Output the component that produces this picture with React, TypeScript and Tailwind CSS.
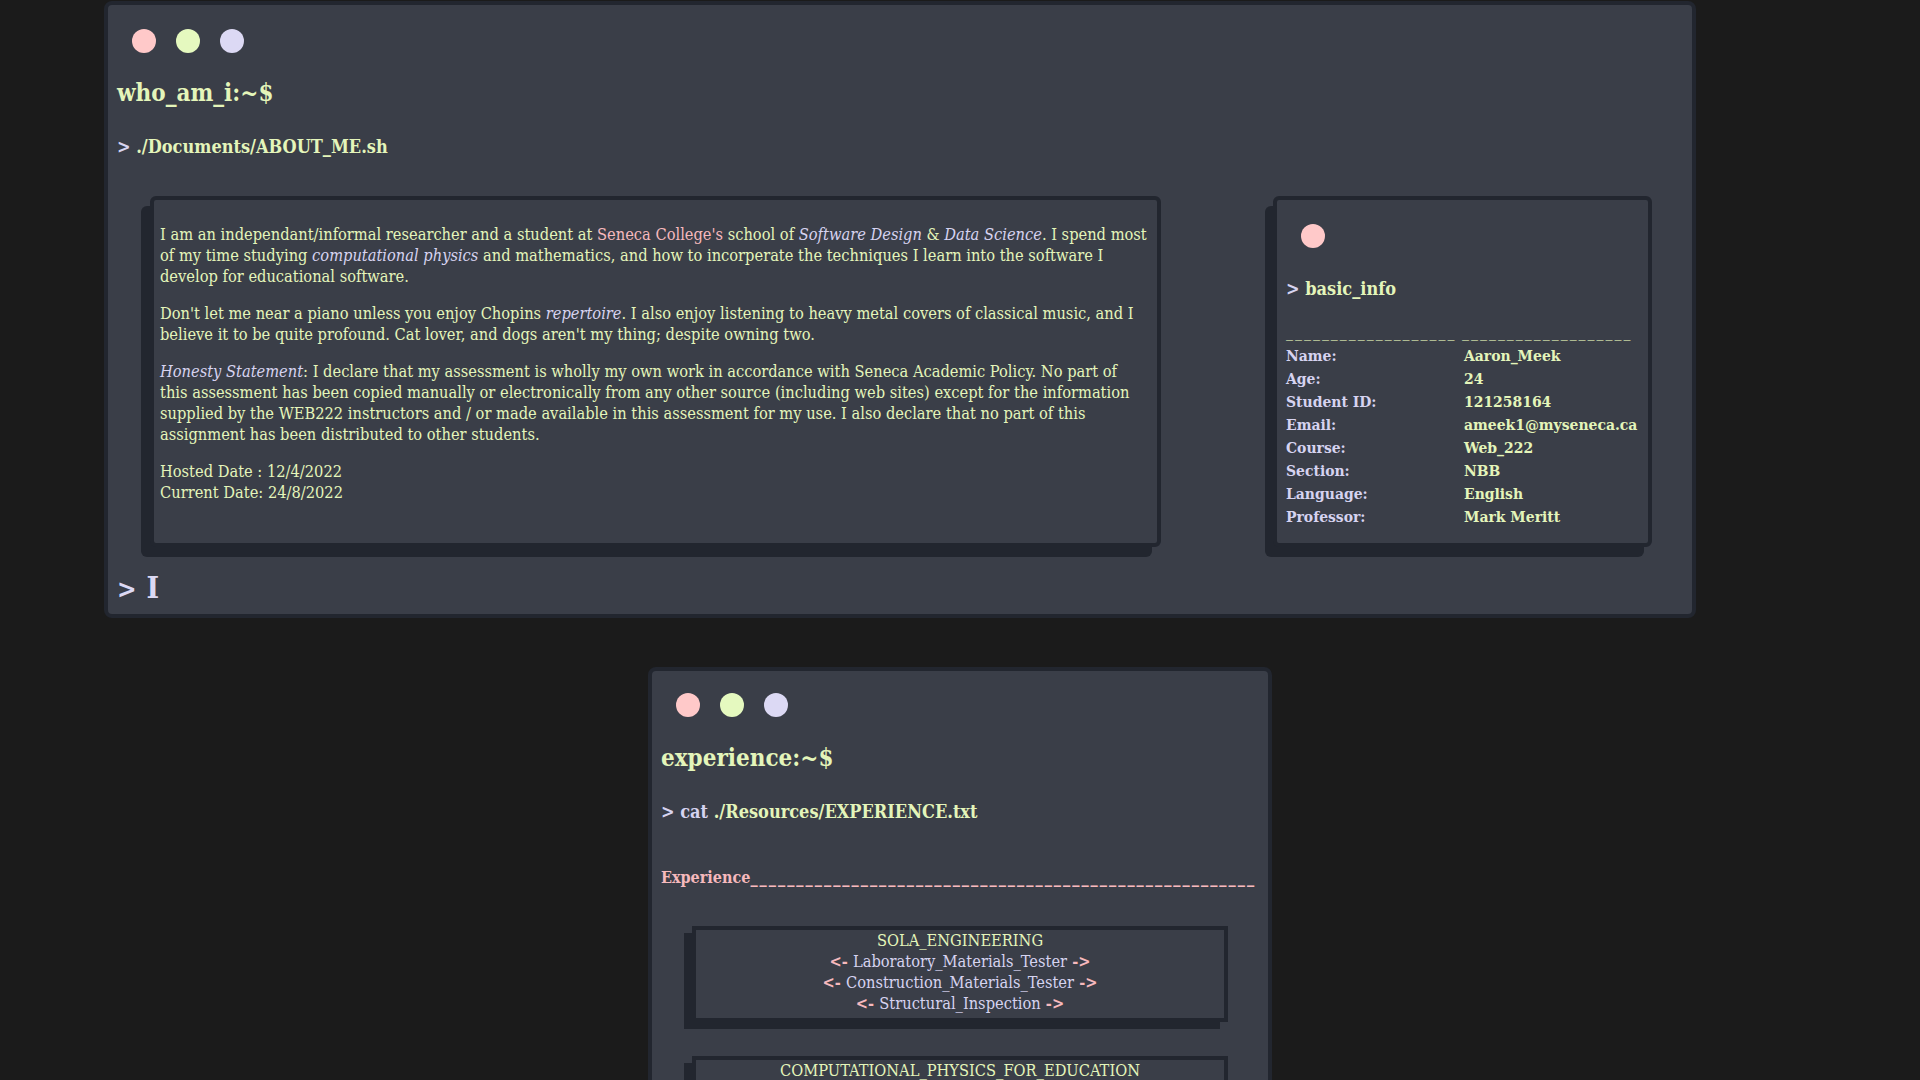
import React from "react";

const GREEN = "text-[#e4f5ba]";

function Dots({ only }: { only?: boolean }) {
  return (
    <div className="flex gap-[20px]">
      <span className="block h-[24px] w-[24px] rounded-full bg-[#ffc9c9]" />
      {!only && <span className="block h-[24px] w-[24px] rounded-full bg-[#e5f9bf]" />}
      {!only && <span className="block h-[24px] w-[24px] rounded-full bg-[#dcd9f4]" />}
    </div>
  );
}

function Em({ children }: { children: React.ReactNode }) {
  return <em className="italic text-[#d6d3f0]">{children}</em>;
}

const rows: [string, string][] = [
  ["Name:", "Aaron_Meek"],
  ["Age:", "24"],
  ["Student ID:", "121258164"],
  ["Email:", "ameek1@myseneca.ca"],
  ["Course:", "Web_222"],
  ["Section:", "NBB"],
  ["Language:", "English"],
  ["Professor:", "Mark Meritt"],
];

function ExpBox({ title, items }: { title: string; items: string[] }) {
  return (
    <div className="mx-[40px] border-4 border-[#22262f] bg-[#3a3e48] pb-[4px] text-center text-[16.3px] leading-[21px] shadow-[-8px_7px_0_#22262f]">
      <div className={GREEN}>{title}</div>
      {items.map((it) => (
        <div key={it} className="text-[#d6d3f0]">
          <span className="font-bold text-[#f6b9bd]">&lt;- </span>
          {it}
          <span className="font-bold text-[#f6b9bd]"> -&gt;</span>
        </div>
      ))}
    </div>
  );
}

export default function App() {
  return (
    <div
      className="min-h-screen bg-[#1b1b1b] pt-[1px] pb-[40px] font-stretch-condensed"
      style={{ fontFamily: '"DejaVu Serif", "Liberation Serif", serif' }}
    >
      {/* Top window */}
      <div className="ml-[104px] w-[1592px] rounded-lg border-4 border-[#22262f] bg-[#3a3e48] pt-[24px] pb-[7px]">
        <div className="pl-[24px]">
          <Dots />
        </div>
        <div className={`mt-[24px] pl-[9px] text-[24px] font-bold leading-[32px] ${GREEN}`}>who_am_i:~$</div>
        <div className={`mt-[26px] pl-[9px] text-[18px] font-bold leading-[24px] ${GREEN}`}>
          <span className="text-[#d6d3f0]">&gt;</span> ./Documents/ABOUT_ME.sh
        </div>

        <div className="mt-[37px] flex justify-between pl-[42px] pr-[40px]">
          {/* About card */}
          <div className="h-[351px] w-[1011px] rounded-md border-4 border-[#22262f] bg-[#3a3e48] pl-[6px] pr-[4px] pt-[24px] shadow-[-9px_10px_0_#22262f]">
            <div className={`flex flex-col gap-[16px] text-[16.3px] leading-[21px] whitespace-nowrap ${GREEN}`}>
              <p>
                I am an independant/informal researcher and a student at{" "}
                <span className="text-[#f6b9bd]">Seneca College's</span> school of <Em>Software Design</Em> &amp;{" "}
                <Em>Data Science</Em>. I spend most
                <br />
                of my time studying <Em>computational physics</Em> and mathematics, and how to incorperate the techniques I
                learn into the software I
                <br />
                develop for educational software.
              </p>
              <p>
                Don't let me near a piano unless you enjoy Chopins <Em>repertoire</Em>. I also enjoy listening to heavy
                metal covers of classical music, and I
                <br />
                believe it to be quite profound. Cat lover, and dogs aren't my thing; despite owning two.
              </p>
              <p>
                <Em>Honesty Statement</Em>: I declare that my assessment is wholly my own work in accordance with Seneca
                Academic Policy. No part of
                <br />
                this assessment has been copied manually or electronically from any other source (including web sites)
                except for the information
                <br />
                supplied by the WEB222 instructors and / or made available in this assessment for my use. I also declare
                that no part of this
                <br />
                assignment has been distributed to other students.
              </p>
              <p>
                Hosted Date : 12/4/2022
                <br />
                Current Date: 24/8/2022
              </p>
            </div>
          </div>

          {/* basic info card */}
          <div className="h-[351px] w-[379px] rounded-md border-4 border-[#22262f] bg-[#3a3e48] pt-[24px] shadow-[-8px_10px_0_#22262f]">
            <div className="pl-[24px]">
              <Dots only />
            </div>
            <div className={`mt-[29px] pl-[9px] text-[18px] font-bold leading-[24px] ${GREEN}`}>
              <span className="text-[#d6d3f0]">&gt;</span> basic_info
            </div>
            <div className="mt-[21px] pl-[9px] pr-[9px] text-[15.5px]">
              <div className="flex h-[22px] whitespace-nowrap leading-[20px] tracking-[2px] text-[#e4f5ba]">
                <div className="w-[176px]">___________________</div>
                <div className="flex-1">___________________</div>
              </div>
              {rows.map(([k, v]) => (
                <div key={k} className="flex h-[23px] items-center leading-[23px] font-semibold">
                  <div className="w-[178px] text-[#d6d3f0]">{k}</div>
                  <div className={`flex-1 ${GREEN}`}>{v}</div>
                </div>
              ))}
            </div>
          </div>
        </div>

        <div className="mt-[23px] flex items-baseline pl-[9px] leading-[36px] text-[#dcd9f4]">
          <span className="text-[26px] font-bold">&gt;</span>
          <span className="ml-[10px] text-[30px] font-bold">I</span>
        </div>
      </div>

      {/* Experience window */}
      <div className="mx-auto mt-[49px] w-[624px] rounded-lg border-4 border-[#22262f] bg-[#3a3e48] pt-[22px] pb-[40px]">
        <div className="pl-[24px]">
          <Dots />
        </div>
        <div className={`mt-[25px] pl-[9px] text-[24px] font-bold leading-[32px] ${GREEN}`}>experience:~$</div>
        <div className={`mt-[26px] pl-[9px] text-[18px] font-bold leading-[24px] ${GREEN}`}>
          <span className="text-[#d6d3f0]">&gt; cat</span> ./Resources/EXPERIENCE.txt
        </div>
        <div className="mt-[43px] flex whitespace-nowrap pl-[9px] pr-[8px] text-[16px] font-semibold leading-[21px] text-[#f6b9bd]">
          <span>Experience</span>
          <span className="tracking-[2px]">_______________________________________________________</span>
        </div>
        <div className="mt-[38px] flex flex-col gap-[34px]">
          <ExpBox
            title="SOLA_ENGINEERING"
            items={["Laboratory_Materials_Tester", "Construction_Materials_Tester", "Structural_Inspection"]}
          />
          <ExpBox title="COMPUTATIONAL_PHYSICS_FOR_EDUCATION" items={[]} />
        </div>
      </div>
    </div>
  );
}
